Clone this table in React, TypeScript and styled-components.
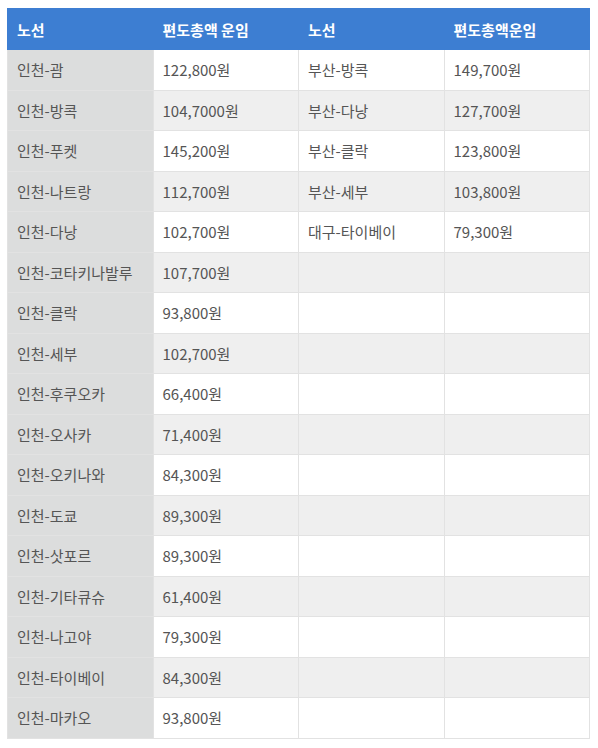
import React from "react";
import styled, { createGlobalStyle } from "styled-components";

const GlobalStyle = createGlobalStyle`
  body {
    margin: 0;
    background: #fff;
    font-family: "Noto Sans CJK KR", "Noto Sans", sans-serif;
  }
`;

const Wrapper = styled.div`
  padding: 8px 8px 0 7px;
`;

const FareTable = styled.table`
  width: 583px;
  border-collapse: collapse;
  table-layout: fixed;
  font-size: 15px;
  color: #555;
`;

const HeadCell = styled.th`
  background: #3d7ed2;
  color: #fff;
  font-weight: 700;
  text-align: left;
  height: 40px;
  padding: 0 9px;
  border: 1px solid #3d7ed2;
`;

const Row = styled.tr<{ $even: boolean }>`
  background: ${(p) => (p.$even ? "#efefef" : "#fff")};
`;

const Cell = styled.td<{ $route?: boolean }>`
  height: 39.5px;
  padding: 0 9px;
  border: 1px solid #e2e2e2;
  background: ${(p) => (p.$route ? "#dcdddd" : "transparent")};
  white-space: nowrap;
`;

const incheon: [string, string][] = [
  ["인천-괌", "122,800원"],
  ["인천-방콕", "104,7000원"],
  ["인천-푸켓", "145,200원"],
  ["인천-나트랑", "112,700원"],
  ["인천-다낭", "102,700원"],
  ["인천-코타키나발루", "107,700원"],
  ["인천-클락", "93,800원"],
  ["인천-세부", "102,700원"],
  ["인천-후쿠오카", "66,400원"],
  ["인천-오사카", "71,400원"],
  ["인천-오키나와", "84,300원"],
  ["인천-도쿄", "89,300원"],
  ["인천-삿포르", "89,300원"],
  ["인천-기타큐슈", "61,400원"],
  ["인천-나고야", "79,300원"],
  ["인천-타이베이", "84,300원"],
  ["인천-마카오", "93,800원"],
];

const others: [string, string][] = [
  ["부산-방콕", "149,700원"],
  ["부산-다낭", "127,700원"],
  ["부산-클락", "123,800원"],
  ["부산-세부", "103,800원"],
  ["대구-타이베이", "79,300원"],
];

export default function App() {
  return (
    <>
      <GlobalStyle />
      <Wrapper>
        <FareTable>
          <thead>
            <tr>
              <HeadCell>노선</HeadCell>
              <HeadCell>편도총액 운임</HeadCell>
              <HeadCell>노선</HeadCell>
              <HeadCell>편도총액운임</HeadCell>
            </tr>
          </thead>
          <tbody>
            {incheon.map(([route, fare], i) => {
              const other = others[i];
              return (
                <Row key={route} $even={i % 2 === 1}>
                  <Cell $route>{route}</Cell>
                  <Cell>{fare}</Cell>
                  <Cell>{other ? other[0] : ""}</Cell>
                  <Cell>{other ? other[1] : ""}</Cell>
                </Row>
              );
            })}
          </tbody>
        </FareTable>
      </Wrapper>
    </>
  );
}
